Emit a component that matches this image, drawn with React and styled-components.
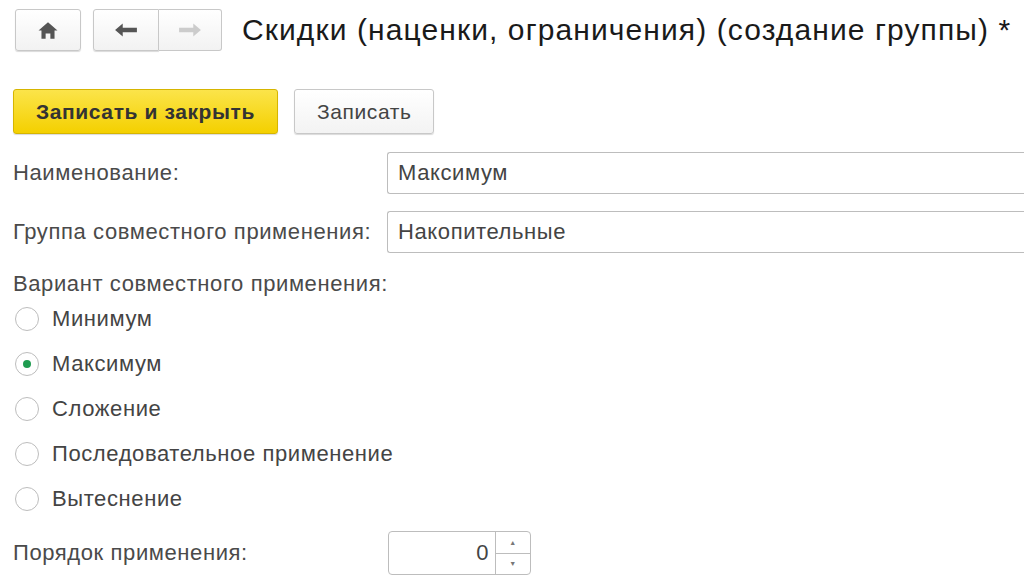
import React from "react";
import styled, { createGlobalStyle } from "styled-components";

const GlobalStyle = createGlobalStyle`
  body {
    margin: 0;
    background: #fff;
    font-family: Arial, "Liberation Sans", sans-serif;
    color: #4a4a4a;
    overflow: hidden;
  }
`;

const Page = styled.div`
  width: 1024px;
  height: 582px;
  overflow: hidden;
  padding: 8px 0 0 13px;
  box-sizing: border-box;
  font-size: 22px;
  letter-spacing: 0.6px;
`;

const Header = styled.div`
  display: flex;
  align-items: center;
  height: 44px;
  letter-spacing: 0;
`;

const NavBtn = styled.div`
  width: ${(p) => p.$w || 64}px;
  height: 42px;
  display: flex;
  align-items: center;
  justify-content: center;
  border: 1px solid #c8c8c8;
  border-radius: 3px;
  background: linear-gradient(#ffffff, #f2f2f2);
  box-shadow: 0 1px 1px rgba(0, 0, 0, 0.15);
  box-sizing: border-box;
  margin-left: ${(p) => p.$ml || 0}px;
`;

const NavGroup = styled.div`
  display: flex;
  margin-left: 12px;
  & > div:first-child { border-radius: 3px 0 0 3px; }
  & > div:last-child { border-radius: 0 3px 3px 0; border-left: none; box-shadow: none; }
`;

const Title = styled.h1`
  margin: 0 0 0 20px;
  font-weight: normal;
  font-size: 30px;
  letter-spacing: 1.1px;
  color: #1a1a1a;
  white-space: nowrap;
`;

const Actions = styled.div`
  display: flex;
  gap: 16px;
  margin-top: 37px;
`;

const Button = styled.div`
  height: 45px;
  padding: 0 ${(p) => (p.$primary ? 22 : 22)}px;
  display: flex;
  align-items: center;
  font-size: 21px;
  font-weight: ${(p) => (p.$primary ? "bold" : "normal")};
  color: ${(p) => (p.$primary ? "#333" : "#444")};
  background: ${(p) =>
    p.$primary ? "linear-gradient(#fbe44a, #f4d000)" : "linear-gradient(#fff, #f3f3f3)"};
  border: 1px solid ${(p) => (p.$primary ? "#d6b500" : "#c8c8c8")};
  border-radius: 3px;
  box-shadow: 0 1px 1px rgba(0, 0, 0, 0.15);
  box-sizing: border-box;
`;

const FieldRow = styled.div`
  display: flex;
  align-items: center;
  margin-top: ${(p) => p.$mt || 0}px;
`;

const Label = styled.div`
  width: 374px;
  white-space: nowrap;
`;

const Input = styled.div`
  flex: 1;
  height: 42px;
  border: 1px solid #bdbdbd;
  border-right: none;
  border-radius: 3px 0 0 3px;
  display: flex;
  align-items: center;
  padding-left: 10px;
  color: #444;
  box-sizing: border-box;
`;

const GroupLabel = styled.div`
  margin-top: 18px;
`;

const Radios = styled.div`
  display: flex;
  flex-direction: column;
  gap: 21px;
  margin-top: 10px;
`;

const RadioRow = styled.div`
  display: flex;
  align-items: center;
  height: 24px;
  color: #444;
`;

const Circle = styled.div`
  width: 24px;
  height: 24px;
  border: 1px solid #bdbdbd;
  border-radius: 50%;
  margin: 0 13px 0 2px;
  box-sizing: border-box;
  display: flex;
  align-items: center;
  justify-content: center;
  background: #fff;
  &::after {
    content: "";
    display: ${(p) => (p.$on ? "block" : "none")};
    width: 8px;
    height: 8px;
    border-radius: 50%;
    background: #1f9c50;
  }
`;

const Spin = styled.div`
  width: 143px;
  height: 44px;
  border: 1px solid #bdbdbd;
  border-radius: 4px;
  display: flex;
  box-sizing: border-box;
  margin-left: 1px;
`;

const SpinValue = styled.div`
  flex: 1;
  display: flex;
  align-items: center;
  justify-content: flex-end;
  padding-right: 6px;
  color: #444;
  border-right: 1px solid #bdbdbd;
`;

const SpinArrows = styled.div`
  width: 34px;
  display: flex;
  flex-direction: column;
  & > div {
    flex: 1;
    display: flex;
    align-items: center;
    justify-content: center;
    font-size: 7px;
    color: #777;
  }
  & > div:first-child { border-bottom: 1px solid #bdbdbd; }
`;

const radios = ["Минимум", "Максимум", "Сложение", "Последовательное применение", "Вытеснение"];

export default function App() {
  return (
    <Page>
      <GlobalStyle />
      <Header>
        <NavBtn $w={66} $ml={2}>
          <svg width="22" height="19" viewBox="0 0 18 16">
            <path d="M9 1 L1 8 H3.5 V15 H7 V10.5 H11 V15 H14.5 V8 H17 Z" fill="#555" />
          </svg>
        </NavBtn>
        <NavGroup>
          <NavBtn $w={66}>
            <svg width="24" height="16" viewBox="0 0 22 14">
              <path d="M1 7 L8 1 V5 H21 V9 H8 V13 Z" fill="#555" />
            </svg>
          </NavBtn>
          <NavBtn $w={63}>
            <svg width="24" height="16" viewBox="0 0 22 14">
              <path d="M21 7 L14 1 V5 H1 V9 H14 V13 Z" fill="#ccc" />
            </svg>
          </NavBtn>
        </NavGroup>
        <Title>Скидки (наценки, ограничения) (создание группы) *</Title>
      </Header>
      <Actions>
        <Button $primary>Записать и закрыть</Button>
        <Button>Записать</Button>
      </Actions>
      <FieldRow $mt={18}>
        <Label>Наименование:</Label>
        <Input>Максимум</Input>
      </FieldRow>
      <FieldRow $mt={17}>
        <Label>Группа совместного применения:</Label>
        <Input>Накопительные</Input>
      </FieldRow>
      <GroupLabel>Вариант совместного применения:</GroupLabel>
      <Radios>
        {radios.map((r) => (
          <RadioRow key={r}>
            <Circle $on={r === "Максимум"} />
            {r}
          </RadioRow>
        ))}
      </Radios>
      <FieldRow $mt={20}>
        <Label>Порядок применения:</Label>
        <Spin>
          <SpinValue>0</SpinValue>
          <SpinArrows>
            <div>▲</div>
            <div>▼</div>
          </SpinArrows>
        </Spin>
      </FieldRow>
    </Page>
  );
}
